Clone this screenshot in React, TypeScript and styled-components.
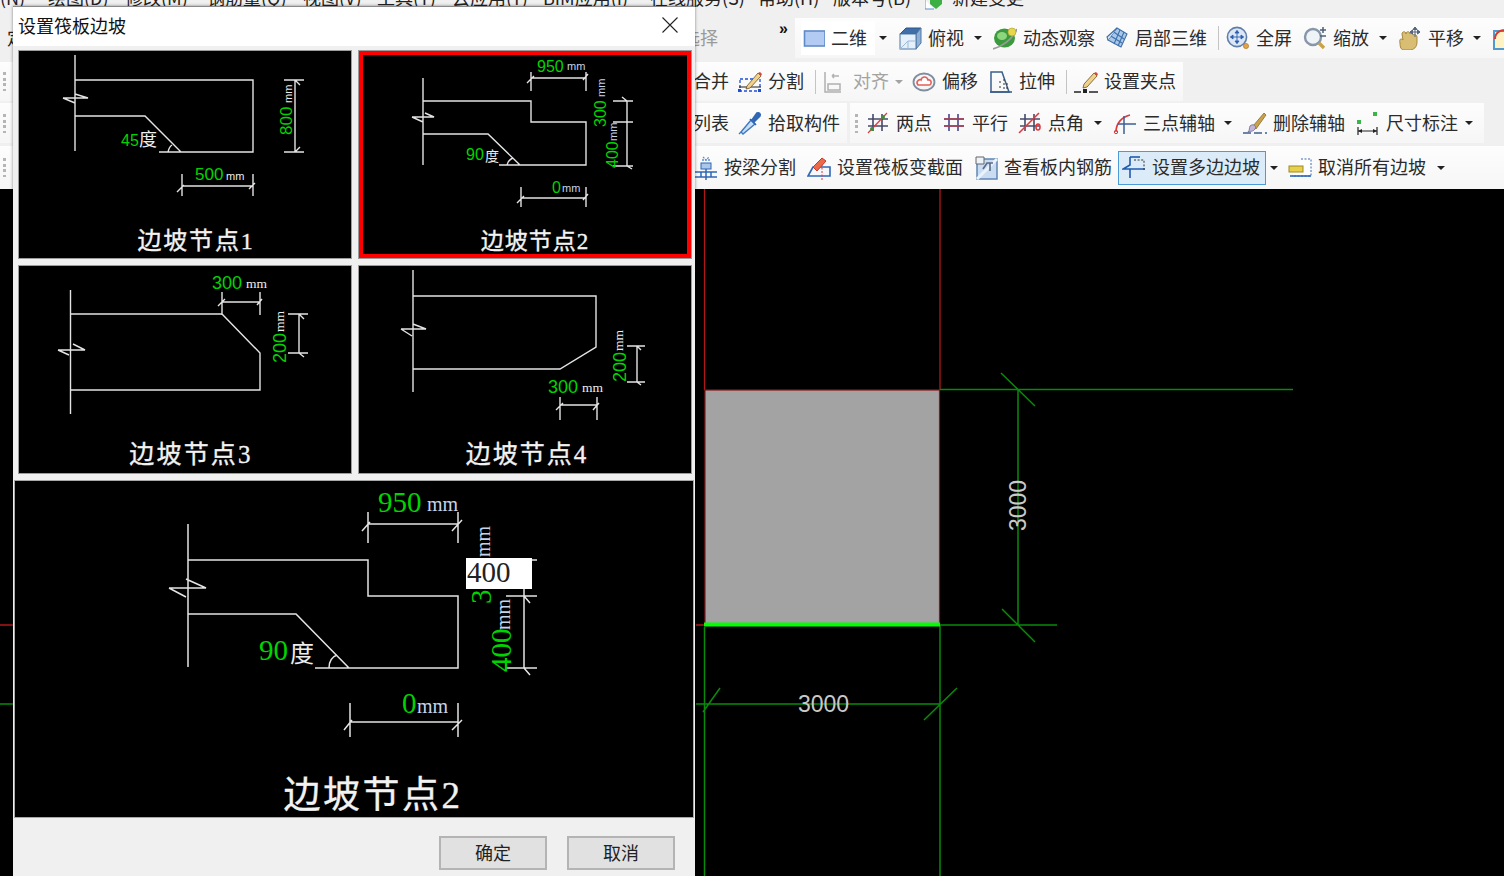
import React from 'react';
import styled, { createGlobalStyle } from 'styled-components';

const CJK = '"Noto Sans CJK SC", "Liberation Sans", sans-serif';

const Global = createGlobalStyle`
  html, body { margin: 0; padding: 0; background: #000; overflow: hidden; }
  * { box-sizing: border-box; }
`;

const Page = styled.div`
  position: relative; width: 1504px; height: 876px; overflow: hidden;
  display: flex; flex-direction: column; font-family: ${CJK}; background: #000;
`;

/* ---------- menu ---------- */
const MenuBar = styled.div`
  height: 18px; flex: none; display: flex; overflow: hidden; background: #f0f0f0;
`;
const MenuItem = styled.div<{ $w: number }>`
  flex: none; width: ${p => p.$w}px; margin-top: -15px; height: 24px; line-height: 24px;
  font-size: 18px; color: #222; white-space: nowrap;
`;
const MenuIcon = styled.svg`flex: none; margin: 0 7px 0 0;`;

/* ---------- toolbar ---------- */
const Toolbars = styled.div`flex: none; background: #f0f0f0;`;
const Row = styled.div<{ $h: number; $gap?: number }>`
  height: ${p => p.$h}px; display: flex; padding-bottom: ${p => p.$gap ?? 0}px;
`;
const Bar = styled.div<{ $w?: number; $pad?: number; $ml?: number }>`
  display: flex; align-items: center; flex: ${p => (p.$w ? 'none' : '1')};
  width: ${p => (p.$w ? `${p.$w}px` : 'auto')};
  padding-left: ${p => p.$pad ?? 0}px; margin-left: ${p => p.$ml ?? 0}px;
  background: linear-gradient(#fdfdfd, #f6f6f6); overflow: hidden;
`;
const LeadArea = styled.div`
  flex: none; width: 795px; display: flex; align-items: center; overflow: hidden; color: #9a9a9a;
  font-size: 18px; white-space: nowrap; padding-bottom: 3px;
`;
const Clipped = styled.span<{ $ml: number; $dark?: boolean }>`
  margin-left: ${p => p.$ml}px; color: ${p => (p.$dark ? '#222' : '#9a9a9a')};
`;
const More = styled.span`
  margin: -16px 0 0 61px; font: bold 16px "Liberation Sans", sans-serif; color: #111;
`;
const Grip = styled.span<{ $ml?: number; $mr?: number }>`
  flex: none; width: 3px; height: 19px; margin: 0 ${p => p.$mr ?? 0}px 0 ${p => p.$ml ?? 3}px;
  background: repeating-linear-gradient(#b5b5b5 0 3px, transparent 3px 5.5px);
`;
const Hidden = styled.span<{ $w: number }>`flex: none; width: ${p => p.$w}px;`;
const Tool = styled.div<{ $w: number; $gray?: boolean; $active?: boolean; $sel?: boolean }>`
  flex: none; width: ${p => p.$w}px; display: flex; align-items: center; gap: 6px; height: 34px;
  font-size: 18px; line-height: 24px; white-space: nowrap; color: ${p => (p.$gray ? '#a3a3a3' : '#2b2b2b')};
  padding-left: ${p => (p.$active ? 3 : 0)}px;
  border: ${p => (p.$active ? '1px solid #4c9ad6' : 'none')};
  background: ${p => (p.$active ? '#dcebf8' : p.$sel ? 'linear-gradient(90deg, #fff 0 74px, transparent 74px)' : 'none')};
  & > span { margin-bottom: 3px; }
`;
const Caret = styled.i<{ $gray?: boolean; $mr?: number; $ml?: string }>`
  flex: none; width: 0; height: 0; margin-left: ${p => p.$ml ?? 'auto'}; margin-right: ${p => p.$mr ?? 11}px;
  border: 4px solid transparent; border-bottom: 0; border-top: 4.5px solid ${p => (p.$gray ? '#a3a3a3' : '#222')};
`;
const Sep = styled.span`
  flex: none; width: 1px; height: 24px; margin: 0 7px 0 6px; background: #c4c4c4;
`;
const PlainTool = styled.span<{ $w: number }>`
  flex: none; width: ${p => p.$w}px; font-size: 18px; color: #2b2b2b; white-space: nowrap; margin-bottom: 3px;
`;
const Glyph = styled.svg`flex: none; display: block;`;

/* ---------- CAD canvas ---------- */
const Canvas = styled.svg`flex: 1; display: block; width: 1504px; min-height: 0;`;
const CadText = styled.text`
  fill: #c9c9c9; font-family: "Liberation Sans", sans-serif; font-size: 23px;
`;

/* ---------- dialog ---------- */
const Dialog = styled.div`
  position: absolute; left: 13px; top: 6px; width: 682px; height: 870px;
  display: flex; flex-direction: column; background: #f0f0f0;
  border-top: 1px solid #8a8a8a; box-shadow: 0 0 3px rgba(0, 0, 0, .45);
`;
const TitleBar = styled.div`
  flex: none; height: 39px; background: #fff; display: flex; align-items: center; justify-content: space-between;
  padding: 0 17px 3px 5px; font-size: 18px; color: #111;
`;
const CloseIcon = styled.svg`display: block;`;
const Grid = styled.div`
  flex: none; display: grid; grid-template-columns: 334px 334px; grid-auto-rows: 209px; gap: 6px;
  padding: 4px 0 0 5px;
`;
const Card = styled.div<{ $selected?: boolean }>`
  background: #000; display: flex; flex-direction: column; overflow: hidden;
  border: 1px solid #9c9c9c;
  box-shadow: ${p => (p.$selected ? 'inset 0 0 0 4px #ff0000' : 'none')};
`;
const Drawing = styled.svg<{ $h: number }>`flex: none; display: block; width: 100%; height: ${p => p.$h}px;`;
const Caption = styled.div<{ $size: number; $ls: number; $pl: number; $pb?: number }>`
  flex: 1; display: flex; align-items: center; justify-content: center;
  padding: 0 0 ${p => p.$pb ?? 0}px ${p => p.$pl}px;
  color: #f2f2f2; font-family: "Liberation Serif", "Noto Sans CJK SC", serif;
  font-size: ${p => p.$size}px; letter-spacing: ${p => p.$ls}px; white-space: nowrap;
  -webkit-text-stroke: .35px #f2f2f2;
`;
const Preview = styled.div`
  position: relative; flex: none; width: 680px; height: 338px; margin: 6px 0 0 1px;
  background: #000; border: 1px solid #a8a8a8; display: flex; flex-direction: column;
`;
const ValueInput = styled.input`
  position: absolute; left: 451px; top: 77px; width: 66px; height: 31px; border: 0; outline: 0; padding: 0 0 2px 1px;
  background: #fff; color: #222; font: 29px "Liberation Serif", serif;
`;
const Footer = styled.div`
  flex: 1; display: flex; justify-content: flex-end; gap: 20px; padding: 18px 20px 0 0; background: #f0f0f0;
`;
const DialogButton = styled.button`
  width: 108px; height: 34px; padding: 0 0 3px; background: #e1e1e1; border: 2px solid #b4b4b4; color: #222;
  font: 18px ${CJK};
`;

const Lines = styled.path<{ $w?: number }>`
  fill: none; stroke: #e4e4e4; stroke-width: ${p => p.$w ?? 1.4}px;
`;
const Label = styled.text<{ $size: number; $tone: string; $serif?: boolean }>`
  fill: ${p => p.$tone}; font-size: ${p => p.$size}px;
  font-family: ${p => (p.$serif ? '"Liberation Serif", "Noto Sans CJK SC", serif' : `"Liberation Sans", "Noto Sans CJK SC", sans-serif`)};
`;

/* ---------- diagrams ---------- */
type L = { t: string; x: number; y: number; s: number; tone?: 'g' | 'w' | 'b'; r?: boolean; serif?: boolean };
const tones = { g: '#00d400', w: '#eeeeee', b: '#c6d4ea' };

const Texts = ({ items }: { items: L[] }) => (
  <>
    {items.map((l, i) => (
      <Label
        key={i}
        x={l.x}
        y={l.y}
        $size={l.s}
        $tone={tones[l.tone ?? 'g']}
        $serif={l.serif}
        transform={l.r ? `rotate(-90 ${l.x} ${l.y})` : undefined}
      >
        {l.t}
      </Label>
    ))}
  </>
);

const cards = [
  {
    x: 18, y: 50, pl: 22, pb: 0, size: 24, ls: 1.8, cap: '边坡节点1', sel: false,
    d: 'M75 55V151M75 80H253V152H159M75 116H145L181 152M168 152Q169 147 172 145M63 98H88L75 94M63 98L75 103M295 80V152M284 80H304M284 152H304M295 80L300 85M295 152L300 147M182 186H253M182 174V196M253 174V196M177 192L184 185M249 189L255 183',
    t: [
      { t: '45', x: 121, y: 146, s: 16 }, { t: '度', x: 139, y: 146, s: 18, tone: 'w' },
      { t: '500', x: 195, y: 180, s: 17 }, { t: 'mm', x: 226, y: 180, s: 11, tone: 'w' },
      { t: '800', x: 292, y: 135, s: 17, r: true }, { t: 'mm', x: 292, y: 103, s: 11, tone: 'w', r: true },
    ] as L[],
  },
  {
    x: 358, y: 50, pl: 20, pb: 0, size: 23, ls: 1, cap: '边坡节点2', sel: true,
    d: 'M423 78V165M423 101H531V122H586V165H499M423 134H488L520 165M507 165Q508 160 513 158M412 117H434L425 113M412 117L423 122M531 78H586M531 72V91M586 72V91M527 83L534 76M583 80L588 74M627 101V166M613 101H633M613 122H633M613 166H633M622 97L627 101M627 166L632 169M521 198H586M521 187V207M586 187V207M517 203L524 196M583 200L588 194',
    t: [
      { t: '950', x: 537, y: 72, s: 16 }, { t: 'mm', x: 567, y: 70, s: 11, tone: 'b' },
      { t: '300', x: 606, y: 127, s: 16, r: true }, { t: 'mm', x: 605, y: 97, s: 11, tone: 'b', r: true },
      { t: '400', x: 618, y: 168, s: 16, r: true }, { t: 'mm', x: 617, y: 141, s: 11, tone: 'b', r: true },
      { t: '90', x: 466, y: 160, s: 16 }, { t: '度', x: 485, y: 161, s: 14, tone: 'w' },
      { t: '0', x: 552, y: 193, s: 16 }, { t: 'mm', x: 562, y: 192, s: 11, tone: 'b' },
    ] as L[],
  },
  {
    x: 18, y: 265, pl: 12, pb: 4, size: 25, ls: 2.2, cap: '边坡节点3', sel: false,
    d: 'M70.5 290V414M70 314H222L260 353V390H70M58 350H85L73 344M58 350L69 355M222 302H260M222 292V315M260 292V315M218 306L225 299M257 305L262 299M299 314V353M288 314H308M288 353H308M299 314L304 319M299 353L304 357',
    t: [
      { t: '300', x: 212, y: 289, s: 18 }, { t: 'mm', x: 246, y: 288, s: 13.5, tone: 'w', serif: true },
      { t: '200', x: 286, y: 363, s: 18, r: true }, { t: 'mm', x: 284, y: 332, s: 13.5, tone: 'w', r: true, serif: true },
    ] as L[],
  },
  {
    x: 358, y: 265, pl: 4, pb: 4, size: 25, ls: 2, cap: '边坡节点4', sel: false,
    d: 'M413 270V392M413 296H596V347L560 369H413M401 329H426L413 324M401 329L412 336M560 405H597M560 397V420M597 397V420M556 410L563 403M593 410L599 403M637 346V382M627 346H645M627 382H645M637 346L641 350M637 382L641 385',
    t: [
      { t: '300', x: 548, y: 393, s: 18 }, { t: 'mm', x: 582, y: 392, s: 13.5, tone: 'w', serif: true },
      { t: '200', x: 626, y: 382, s: 18, r: true }, { t: 'mm', x: 623, y: 351, s: 13.5, tone: 'w', r: true, serif: true },
    ] as L[],
  },
];

const previewPath =
  'M188 524V667M188 560H368V596H458V668H315M188 614H296L349 668M329 668Q329 658 337 655M169 588H206L186 579M169 588L186 597M368 524H458M368 512V543M458 512V543M362 531L370 522M452 531L462 520M524 560V668M506 596H537M506 668H537M495 560H537M524 596L530 603M524 668L530 675M350 722H458M350 703V737M458 703V737M344 730L352 720M452 730L462 720';

const previewText: L[] = [
  { t: '950', x: 378, y: 512, s: 29, serif: true }, { t: 'mm', x: 427, y: 511, s: 20, tone: 'b', serif: true },
  { t: 'mm', x: 490, y: 557, s: 20, tone: 'b', serif: true, r: true },
  { t: '3', x: 491, y: 604, s: 29, serif: true, r: true },
  { t: '400', x: 511, y: 672, s: 29, serif: true, r: true }, { t: 'mm', x: 510, y: 630, s: 20, tone: 'b', serif: true, r: true },
  { t: '90', x: 259, y: 660, s: 29, serif: true }, { t: '度', x: 290, y: 662, s: 24, tone: 'w', serif: true },
  { t: '0', x: 402, y: 713, s: 29, serif: true }, { t: 'mm', x: 417, y: 713, s: 20, tone: 'b', serif: true },
];

/* ---------- icons ---------- */
const hash = (c: string) => <path d="M7 3V20M16 3V20M2 8H22M2 15H22" stroke={c} strokeWidth="1.6" fill="none" />;
const iconArt: Record<string, React.ReactNode> = {
  plan: <rect x="3.500" y="5" width="20.500" height="15" fill="#b3cbf3" stroke="#5f8bc9" strokeWidth="1.6" />,
  cube: (
    <>
      <path d="M2 8L8 2H23L18 8Z" fill="#3f6ea8" stroke="#2d5587" />
      <path d="M18 8L23 2V17L18 23Z" fill="#8fb0d4" stroke="#4c76a6" />
      <rect x="2" y="8" width="16" height="15" fill="#e6f0fa" stroke="#4c76a6" />
      <path d="M10 23V15H18M10 15L2 23" stroke="#9dbbd8" fill="none" />
    </>
  ),
  orbit: (
    <>
      <ellipse cx="11.500" cy="12" rx="10.500" ry="9.500" fill="#3c9a3e" />
      <ellipse cx="9" cy="10" rx="5" ry="4" fill="#8ed67e" />
      <path d="M0 23C8 21 19 14 24 3" stroke="#9a9a9a" strokeWidth="1.8" fill="none" />
      <circle cx="19" cy="6" r="4" fill="#e6d84a" stroke="#a99b2a" strokeWidth=".6" />
    </>
  ),
  local3d: (
    <g stroke="#3e6fa8" strokeWidth="1.1" fill="#a9c8ea">
      <path d="M12 2L22 8L16 21L3 14Z" />
      <path d="M8 5.5L19 13M5 9.5L17 17M15 4L9 18M19 6L13 20" fill="none" />
      <path d="M3 14L2 11L12 2" fill="#d8e8f7" />
    </g>
  ),
  full: (
    <>
      <circle cx="11" cy="11" r="9.6" fill="#dbe6f7" stroke="#5f7ea8" strokeWidth="1.6" />
      <path d="M11 4.5V17.5M4.5 11H17.5M11 4.5L9 7H13ZM11 17.5L9 15H13ZM4.5 11L7 9V13ZM17.5 11L15 9V13Z" stroke="#2b5db0" fill="#2b5db0" strokeWidth=".9" />
      <circle cx="20" cy="20" r="2.6" fill="#e3a34b" stroke="#a86f22" strokeWidth=".6" />
    </>
  ),
  zoom: (
    <>
      <circle cx="10" cy="11" r="8" fill="#eef3f8" stroke="#8796a8" strokeWidth="2.4" />
      <path d="M16 17L21 22" stroke="#c9a24d" strokeWidth="3.4" />
      <path d="M20 1V7M17 4H23M17 10H23" stroke="#4f5f78" strokeWidth="1.5" />
    </>
  ),
  pan: (
    <>
      <path d="M2 17C1 13 3 12 5 14L4 8C4 5 8 5 8 8C8 5 12 5 12 8C13 6 15 7 15 9C17 8 19 9 19 11V16C19 21 16 24 11 24H6C3 24 2 21 2 17Z" fill="#d9bd72" stroke="#a1873f" />
      <path d="M17 1V11M12 6H22M17 1L15 3.5H19ZM22 6L19.500 4V8ZM12 6L14.500 4V8Z" stroke="#55677f" fill="#55677f" />
    </>
  ),
  last: (
    <>
      <rect x="2" y="5" width="20" height="18" fill="#fff3c4" stroke="#4f9ad0" strokeWidth="2" />
      <path d="M3 13C3 6 10 2 17 6" stroke="#d9382e" strokeWidth="2" fill="none" />
      <rect x="12" y="14" width="6" height="5" fill="#7fc7e8" />
    </>
  ),
  split: (
    <>
      <path d="M2 9H22V21H2Z" fill="none" stroke="#1f4fd8" strokeWidth="1.3" strokeDasharray="3 2" />
      <path d="M1 17H23" stroke="#222" />
      <path d="M9 16L20 3L23 6L12 18L8 19Z" fill="#f1d28c" stroke="#6a5020" strokeWidth=".8" />
      <path d="M20 3L23 6L24 4L22 2Z" fill="#d8483e" />
      <rect x="0" y="19" width="3" height="3" fill="#1f4fd8" />
      <rect x="20" y="19" width="3" height="3" fill="#1f4fd8" />
    </>
  ),
  align: (
    <g stroke="#b0b0b0" strokeWidth="1.5" fill="none">
      <path d="M2 2V22H18" />
      <rect x="5" y="14" width="12" height="6" />
      <path d="M9 6H16M9 6L11 4M9 6L11 8" />
    </g>
  ),
  offset: (
    <>
      <ellipse cx="12" cy="12" rx="10.500" ry="8.500" fill="#f6f6f6" stroke="#7f8da0" strokeWidth="1.8" />
      <path d="M6 15C3 11 8 9 9 10C10 6 15 6 16 10C20 9 20 15 17 15Z" fill="#fff" stroke="#e1605a" strokeWidth="1.6" />
    </>
  ),
  stretch: (
    <g fill="none">
      <path d="M2 22V2H13L20 22Z" stroke="#3c5f8a" strokeWidth="1.5" />
      <path d="M15 9V20M18 13V20M10 12H13M10 17H13" stroke="#333" strokeDasharray="2 2" />
      <path d="M1 22H23" stroke="#3c5f8a" strokeWidth="1.6" />
    </g>
  ),
  grips: (
    <>
      <path d="M0 22H7M15 22H24" stroke="#222" strokeWidth="1.5" />
      <rect x="9" y="19" width="4" height="4" fill="#222" />
      <path d="M10 14L20 3L23 6L13 17L9 18Z" fill="#f1d28c" stroke="#6a5020" strokeWidth=".8" />
      <path d="M20 3L23 6L24 4L22 2Z" fill="#d8483e" />
    </>
  ),
  dropper: (
    <>
      <path d="M3 21L1 23M3 21L13 9L17 13L5 23Z" fill="#c7def5" stroke="#3f78c0" strokeWidth="1.4" />
      <path d="M12 8L18 14M14 9L19 2C21 1 23 3 22 5L16 11" fill="#2f67b4" stroke="#2f67b4" strokeWidth="1.6" />
    </>
  ),
  twoPts: (
    <>
      {hash('#444a6a')}
      <path d="M2 22L21 2" stroke="#e0393c" strokeWidth="1.2" />
      <circle cx="6" cy="18" r="2" fill="#3e8e3c" />
      <circle cx="17" cy="6" r="2" fill="#3e8e3c" />
    </>
  ),
  parallel: <>{hash('#45458f')}<path d="M2 8H22M2 15H22" stroke="#b0404c" strokeWidth="1.5" /></>,
  angle: (
    <>
      {hash('#444a6a')}
      <path d="M1 22L21 2" stroke="#e0393c" strokeWidth="1.6" />
      <ellipse cx="20" cy="16" rx="2" ry="3" fill="none" stroke="#e0393c" strokeWidth="1.6" />
    </>
  ),
  arc: (
    <>
      <path d="M3 21C3 12 9 6 17 4" stroke="#dd3a3a" strokeWidth="1.6" fill="none" />
      <path d="M11 5V23M5 13H23" stroke="#3c5f9a" strokeWidth="1.5" />
      <circle cx="3" cy="21" r="1.7" fill="none" stroke="#dd3a3a" />
    </>
  ),
  brush: (
    <>
      <path d="M10 15L21 2L23 4L13 18Z" fill="#c9a24d" stroke="#7b6020" strokeWidth=".7" />
      <path d="M7 15C10 12 14 15 12 18C10 21 7 20 5 21C7 19 6 17 7 15Z" fill="#c2b6d8" stroke="#74648f" strokeWidth=".8" />
      <path d="M0 22H24" stroke="#3c5f8a" strokeWidth="1.6" strokeDasharray="8 3" />
    </>
  ),
  dim: (
    <>
      <rect x="1" y="9" width="4" height="4" fill="#39b54a" />
      <rect x="17" y="1" width="4" height="4" fill="#39b54a" />
      <path d="M2 16V24M21 16V24M2 20H21" stroke="#222" strokeWidth="1.2" />
      <path d="M2 20L6 18V22ZM21 20L17 18V22Z" fill="#222" />
    </>
  ),
  beam: (
    <>
      <path d="M8 4H16M9 1L12 4L15 1" stroke="#5b8fd9" strokeWidth="1.3" fill="none" strokeDasharray="2 1" />
      <rect x="7" y="7" width="10" height="6" fill="#a9c8ea" stroke="#2f67b4" />
      <path d="M1 16H23M1 21H23M12 13V24M7 16V21M17 16V21" stroke="#2f67b4" strokeWidth="1.5" fill="none" />
    </>
  ),
  section: (
    <>
      <path d="M1 20L6 11H23V20Z" fill="#f4f8fc" stroke="#2f67b4" strokeWidth="1.6" />
      <path d="M15 8V24" stroke="#e0393c" strokeDasharray="2 1.5" />
      <path d="M6 11L15 2L19 5L10 15Z" fill="#ec6a4a" stroke="#c53a28" />
    </>
  ),
  rebar: (
    <>
      <rect x="3" y="3" width="20" height="20" fill="#c9dcf1" stroke="#5f86b5" strokeWidth="1.5" />
      <path d="M3 23L23 3" stroke="#eaf2fb" strokeWidth="3" />
      <path d="M2 1H10V8H2Z" fill="#eef3f8" stroke="#666" />
      <path d="M9 13L13 7H19M16 7V15" stroke="#5a6b85" strokeWidth="1.6" fill="none" />
    </>
  ),
  multi: (
    <>
      <path d="M8 1V9L1 13H8V22M8 13H23" fill="none" stroke="#1e5bb0" strokeWidth="1.6" />
      <path d="M8 1H18" stroke="#1e5bb0" strokeWidth="1.6" />
      <path d="M12 4H22V14" fill="none" stroke="#333" strokeDasharray="2 1.6" />
    </>
  ),
  cancel: (
    <>
      <path d="M13 3H23V20H4" fill="#fff" stroke="#3a6bb0" strokeDasharray="2 1.5" />
      <rect x="1" y="10" width="14" height="6" fill="#e8cf4c" stroke="#9c8a20" />
      <path d="M2 20H23" stroke="#2f67b4" strokeWidth="1.6" />
    </>
  ),
};
const Icon = ({ n }: { n: string }) => (
  <Glyph width="24" height="24" viewBox="0 0 24 24">{iconArt[n]}</Glyph>
);

const menus: [string, number][] = [
  ['(N)', 48], ['绘图(D)', 77], ['修改(M)', 82], ['钢筋量(Q)', 96], ['视图(V)', 74], ['工具(T)', 75],
  ['云应用(Y)', 91], ['BIM应用(I)', 107], ['在线服务(S)', 108], ['帮助(H)', 75], ['版本号(B)', 92],
];

export default function App() {
  return (
    <Page>
      <Global />
      <MenuBar>
        {menus.map(([t, w]) => <MenuItem key={t} $w={w}>{t}</MenuItem>)}
        <MenuIcon width="20" height="10" viewBox="0 0 20 10">
          <path d="M0 0V9H9" fill="#fff" stroke="#5a8fd0" />
          <path d="M5 0H17V4L11 9L5 4Z" fill="#3cb043" />
        </MenuIcon>
        <MenuItem $w={80}>新建变更</MenuItem>
      </MenuBar>
      <Toolbars>
        <Row $h={44} $gap={4}>
          <LeadArea>
            <Clipped $ml={7} $dark>定</Clipped>
            <Clipped $ml={657}>选择</Clipped>
            <More>»</More>
          </LeadArea>
          <Bar $pad={6}>
            <Tool $w={97} $sel><Icon n="plan" /><span>二维</span><Caret /></Tool>
            <Tool $w={95}><Icon n="cube" /><span>俯视</span><Caret /></Tool>
            <Tool $w={112}><Icon n="orbit" /><span>动态观察</span></Tool>
            <Tool $w={107}><Icon n="local3d" /><span>局部三维</span></Tool>
            <Sep />
            <Tool $w={77}><Icon n="full" /><span>全屏</span></Tool>
            <Tool $w={95}><Icon n="zoom" /><span>缩放</span><Caret /></Tool>
            <Tool $w={94}><Icon n="pan" /><span>平移</span><Caret /></Tool>
            <Tool $w={24}><Icon n="last" /></Tool>
          </Bar>
        </Row>
        <Row $h={41} $gap={2}>
          <Bar $w={1183}>
            <Grip />
            <Hidden $w={687} />
            <PlainTool $w={45}>合并</PlainTool>
            <Tool $w={71}><Icon n="split" /><span>分割</span></Tool>
            <Sep />
            <Tool $w={89} $gray><Icon n="align" /><span>对齐</span><Caret $gray $mr={10} /></Tool>
            <Tool $w={77}><Icon n="offset" /><span>偏移</span></Tool>
            <Tool $w={71}><Icon n="stretch" /><span>拉伸</span></Tool>
            <Sep />
            <Tool $w={103}><Icon n="grips" /><span>设置夹点</span></Tool>
          </Bar>
        </Row>
        <Row $h={43} $gap={3}>
          <Bar $w={847}>
            <Grip />
            <Hidden $w={687} />
            <PlainTool $w={45}>列表</PlainTool>
            <Tool $w={104}><Icon n="dropper" /><span>拾取构件</span></Tool>
          </Bar>
          <Bar $w={634} $ml={3} $pad={0}>
            <Grip $ml={5} $mr={8} />
            <Tool $w={76}><Icon n="twoPts" /><span>两点</span></Tool>
            <Tool $w={76}><Icon n="parallel" /><span>平行</span></Tool>
            <Tool $w={95}><Icon n="angle" /><span>点角</span><Caret /></Tool>
            <Tool $w={130}><Icon n="arc" /><span>三点辅轴</span><Caret /></Tool>
            <Tool $w={113}><Icon n="brush" /><span>删除辅轴</span></Tool>
            <Tool $w={128}><Icon n="dim" /><span>尺寸标注</span><Caret /></Tool>
          </Bar>
        </Row>
        <Row $h={43}>
          <Bar>
            <Grip />
            <Hidden $w={688} />
            <Tool $w={113}><Icon n="beam" /><span>按梁分割</span></Tool>
            <Tool $w={167}><Icon n="section" /><span>设置筏板变截面</span></Tool>
            <Tool $w={144}><Icon n="rebar" /><span>查看板内钢筋</span></Tool>
            <Tool $w={148} $active><Icon n="multi" /><span>设置多边边坡</span></Tool>
            <Caret $ml="4px" $mr={10} />
            <Tool $w={168}><Icon n="cancel" /><span>取消所有边坡</span><Caret /></Tool>
          </Bar>
        </Row>
      </Toolbars>

      <Canvas viewBox="0 189 1504 687">
        <path d="M704.5 189V390M940 189V390M0 625H14M696 625H704" stroke="#b01818" strokeWidth="1.3" fill="none" />
        <rect x="705" y="390" width="234.500" height="235" fill="#a3a3a3" stroke="#8a1a1a" strokeWidth="1.2" />
        <path
          d="M940 389.500H1293M940 625H1057M1018 389.500V625M1001 373L1035 406M1002 609L1035 642M0 704H14M696 704H940M703 712L720 688M924 720L957 688M704.500 627V876M940 625V876"
          stroke="#0a8a0a"
          strokeWidth="1.5"
          fill="none"
        />
        <rect x="704" y="622.500" width="236" height="4" fill="#00ff00" />
        <CadText x="798" y="712">3000</CadText>
        <CadText x="1026" y="531" transform="rotate(-90 1026 531)">3000</CadText>
      </Canvas>

      <Dialog>
        <TitleBar>
          <span>设置筏板边坡</span>
          <CloseIcon width="16" height="16" viewBox="0 0 16 16">
            <path d="M.5 .5L15.500 15.500M15.500 .5L.5 15.500" stroke="#222" strokeWidth="1.1" />
          </CloseIcon>
        </TitleBar>
        <Grid>
          {cards.map(c => (
            <Card key={c.cap} $selected={c.sel}>
              <Drawing $h={168} viewBox={`${c.x + 1} ${c.y + 1} 332 168`}>
                <Lines d={c.d} />
                <Texts items={c.t} />
              </Drawing>
              <Caption $size={c.size} $ls={c.ls} $pl={c.pl} $pb={c.pb}>{c.cap}</Caption>
            </Card>
          ))}
        </Grid>
        <Preview>
          <Drawing $h={284} viewBox="15 481 678 284">
            <Lines d={previewPath} $w={1.5} />
            <Texts items={previewText} />
          </Drawing>
          <Caption $size={37} $ls={2.5} $pl={38} $pb={8}>边坡节点2</Caption>
          <ValueInput readOnly value="400" />
        </Preview>
        <Footer>
          <DialogButton>确定</DialogButton>
          <DialogButton>取消</DialogButton>
        </Footer>
      </Dialog>
    </Page>
  );
}
